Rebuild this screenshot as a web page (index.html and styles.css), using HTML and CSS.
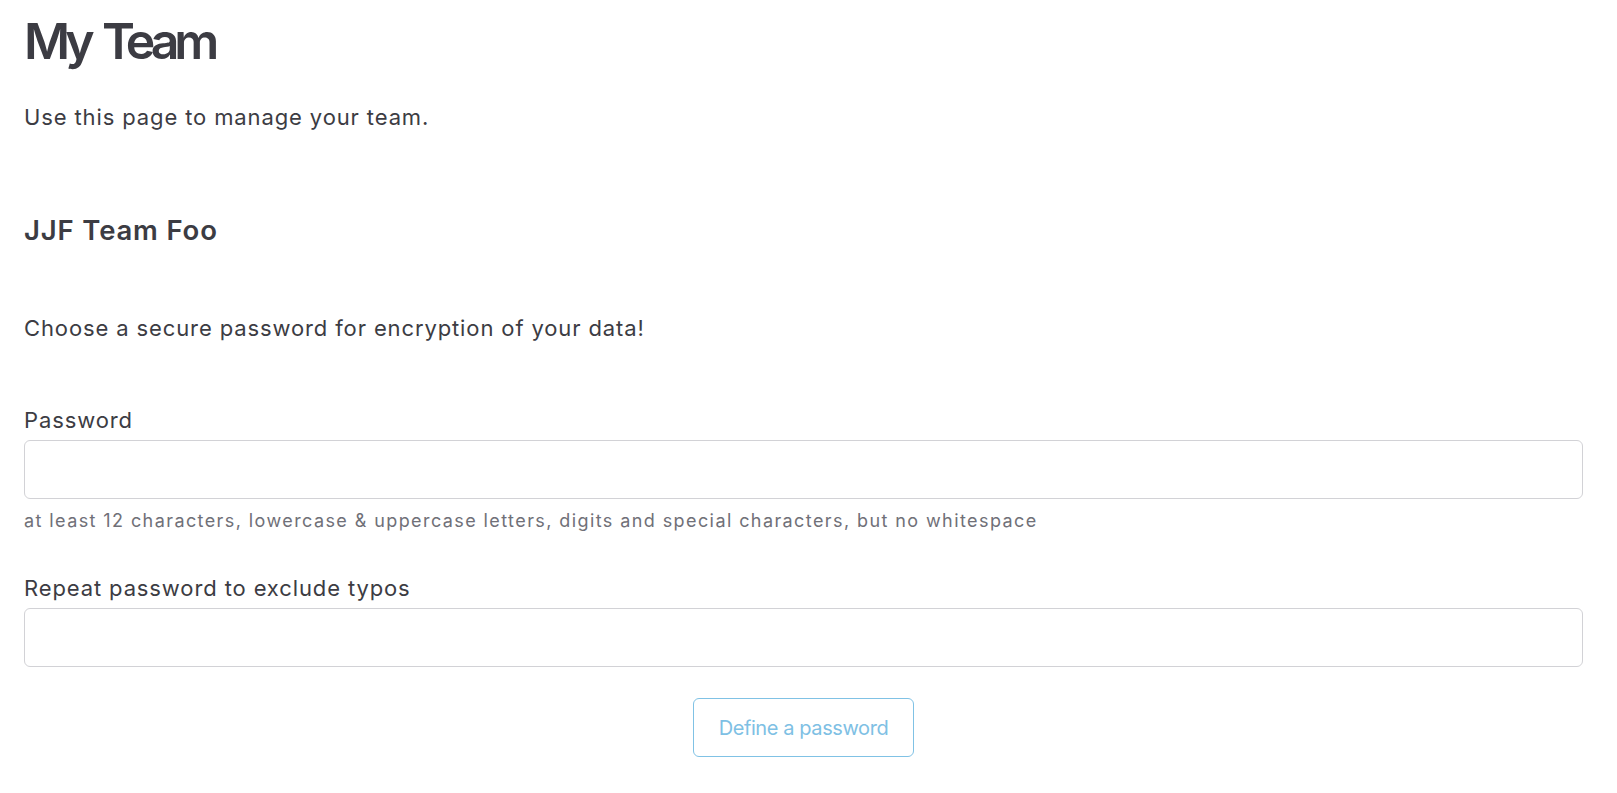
FILE: index.html
```html
<!DOCTYPE html>
<html lang="en">
<head>
<meta charset="utf-8">
<title>My Team</title>
<link rel="stylesheet" href="styles.css">
</head>
<body>
<main class="page">
  <h1 class="title">My Team</h1>
  <p class="lead">Use this page to manage your team.</p>
  <h2 class="team-name">JJF Team Foo</h2>
  <p class="intro">Choose a secure password for encryption of your data!</p>
  <form class="pw-form">
    <div class="field">
      <label class="field-label" for="pw1">Password</label>
      <input class="field-input" id="pw1" type="password">
      <div class="field-help">at least 12 characters, lowercase &amp; uppercase letters, digits and special characters, but no whitespace</div>
    </div>
    <div class="field field-second">
      <label class="field-label" for="pw2">Repeat password to exclude typos</label>
      <input class="field-input" id="pw2" type="password">
    </div>
    <div class="actions">
      <button class="btn-define" type="button" disabled>Define a password</button>
    </div>
  </form>
</main>
</body>
</html>
```
FILE: styles.css
```css
html, body {
  margin: 0;
  padding: 0;
  background: #ffffff;
}

body {
  font-family: Inter, "Noto Sans", "Liberation Sans", sans-serif;
  color: #3c3c43;
  font-size: 22px;
  letter-spacing: 0.88px;
}

.page {
  padding: 11px 34px 0 24px;
}

.title {
  margin: 0;
  font-size: 50px;
  line-height: 60px;
  font-weight: 600;
  letter-spacing: -5.2px;
  word-spacing: 5px;
}

.lead {
  margin: 31px 0 0;
  font-size: 22px;
  line-height: 30px;
}

.team-name {
  margin: 82px 0 0;
  font-size: 27.5px;
  line-height: 33px;
  font-weight: 600;
  letter-spacing: 0.83px;
}

.intro {
  margin: 66px 0 0;
  font-size: 22px;
  line-height: 30px;
}

.pw-form {
  margin: 62px 0 0;
}

.field-label {
  display: block;
  font-size: 22px;
  line-height: 30px;
  margin-bottom: 5px;
}

.field-input {
  display: block;
  box-sizing: border-box;
  width: 100%;
  height: 59px;
  margin: 0;
  border: 1px solid #d2d2d6;
  border-radius: 6px;
  background: #ffffff;
  font: inherit;
  padding: 0 15px;
}

.field-help {
  margin-top: 9px;
  font-size: 18px;
  line-height: 26px;
  letter-spacing: 1.41px;
  color: #707078;
}

.field-second {
  margin-top: 39px;
}

.actions {
  display: flex;
  justify-content: center;
  margin-top: 31px;
}

.btn-define {
  box-sizing: border-box;
  height: 59px;
  padding: 0 25px;
  border: 1px solid #80c2e5;
  border-radius: 6px;
  background: #ffffff;
  color: #7ec0e4;
  font-family: Inter, "Noto Sans", "Liberation Sans", sans-serif;
  font-size: 20px;
  line-height: 30px;
  letter-spacing: -0.4px;
}
```
